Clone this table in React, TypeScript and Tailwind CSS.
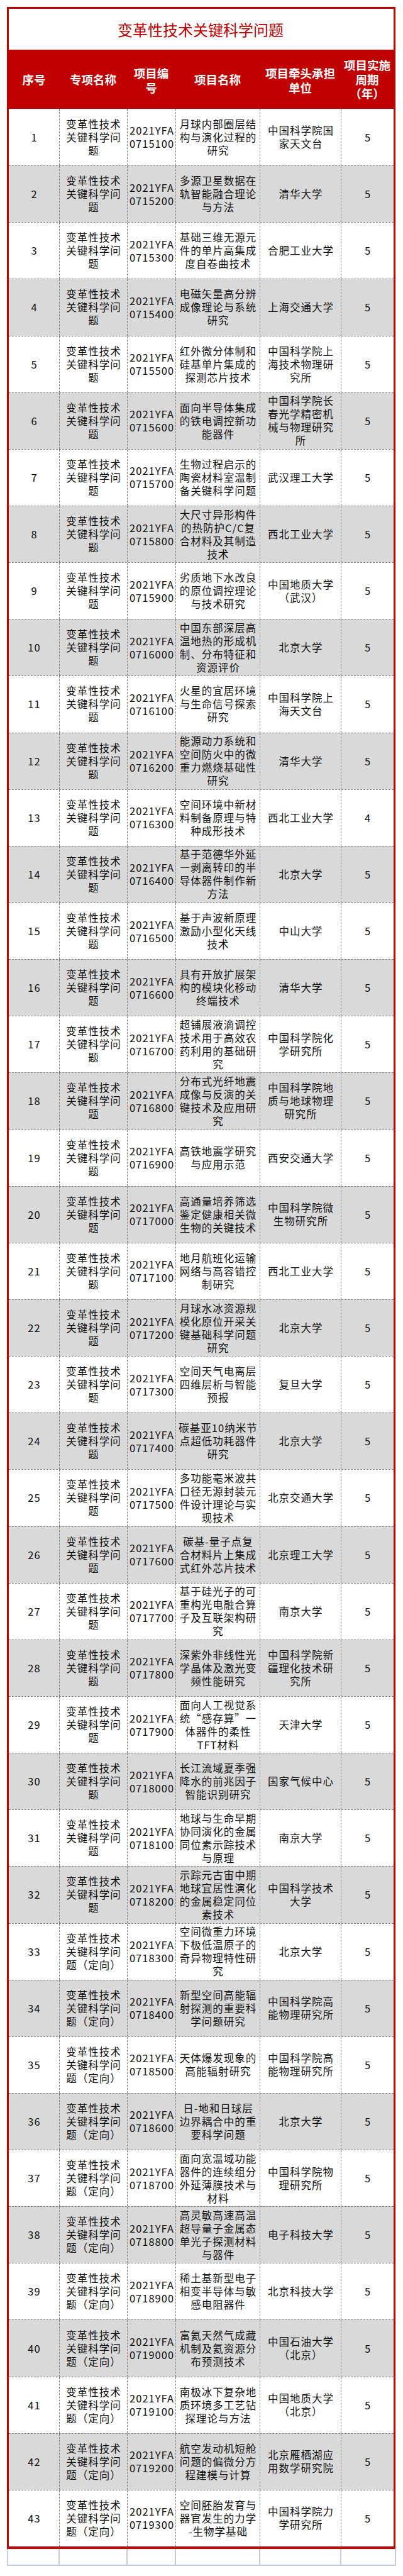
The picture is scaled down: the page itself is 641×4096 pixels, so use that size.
import React from 'react';

type Project = {
  code: string;
  name: string;
  unit: string;
  years?: number;
  directed?: boolean;
};

// lines inside a cell are separated by "|"
const projects: Project[] = [
  { code: '0715100', name: '月球内部圈层结|构与演化过程的|研究', unit: '中国科学院国|家天文台' },
  { code: '0715200', name: '多源卫星数据在|轨智能融合理论|与方法', unit: '清华大学' },
  { code: '0715300', name: '基础三维无源元|件的单片高集成|度自卷曲技术', unit: '合肥工业大学' },
  { code: '0715400', name: '电磁矢量高分辨|成像理论与系统|研究', unit: '上海交通大学' },
  { code: '0715500', name: '红外微分体制和|硅基单片集成的|探测芯片技术', unit: '中国科学院上|海技术物理研|究所' },
  { code: '0715600', name: '面向半导体集成|的铁电调控新功|能器件', unit: '中国科学院长|春光学精密机|械与物理研究|所' },
  { code: '0715700', name: '生物过程启示的|陶瓷材料室温制|备关键科学问题', unit: '武汉理工大学' },
  { code: '0715800', name: '大尺寸异形构件|的热防护C/C复|合材料及其制造|技术', unit: '西北工业大学' },
  { code: '0715900', name: '劣质地下水改良|的原位调控理论|与技术研究', unit: '中国地质大学|（武汉）' },
  { code: '0716000', name: '中国东部深层高|温地热的形成机|制、分布特征和|资源评价', unit: '北京大学' },
  { code: '0716100', name: '火星的宜居环境|与生命信号探索|研究', unit: '中国科学院上|海天文台' },
  { code: '0716200', name: '能源动力系统和|空间防火中的微|重力燃烧基础性|研究', unit: '清华大学' },
  { code: '0716300', name: '空间环境中新材|料制备原理与特|种成形技术', unit: '西北工业大学', years: 4 },
  { code: '0716400', name: '基于范德华外延|—剥离转印的半|导体器件制作新|方法', unit: '北京大学' },
  { code: '0716500', name: '基于声波新原理|激励小型化天线|技术', unit: '中山大学' },
  { code: '0716600', name: '具有开放扩展架|构的模块化移动|终端技术', unit: '清华大学' },
  { code: '0716700', name: '超铺展液滴调控|技术用于高效农|药利用的基础研|究', unit: '中国科学院化|学研究所' },
  { code: '0716800', name: '分布式光纤地震|成像与反演的关|键技术及应用研|究', unit: '中国科学院地|质与地球物理|研究所' },
  { code: '0716900', name: '高铁地震学研究|与应用示范', unit: '西安交通大学' },
  { code: '0717000', name: '高通量培养筛选|鉴定健康相关微|生物的关键技术', unit: '中国科学院微|生物研究所' },
  { code: '0717100', name: '地月航班化运输|网络与高容错控|制研究', unit: '西北工业大学' },
  { code: '0717200', name: '月球水冰资源规|模化原位开采关|键基础科学问题|研究', unit: '北京大学' },
  { code: '0717300', name: '空间天气电离层|四维层析与智能|预报', unit: '复旦大学' },
  { code: '0717400', name: '碳基亚10纳米节|点超低功耗器件|研究', unit: '北京大学' },
  { code: '0717500', name: '多功能毫米波共|口径无源封装元|件设计理论与实|现技术', unit: '北京交通大学' },
  { code: '0717600', name: '碳基-量子点复|合材料片上集成|式红外芯片技术', unit: '北京理工大学' },
  { code: '0717700', name: '基于硅光子的可|重构光电融合算|子及互联架构研|究', unit: '南京大学' },
  { code: '0717800', name: '深紫外非线性光|学晶体及激光变|频性能研究', unit: '中国科学院新|疆理化技术研|究所' },
  { code: '0717900', name: '面向人工视觉系|统“感存算”一|体器件的柔性|TFT材料', unit: '天津大学' },
  { code: '0718000', name: '长江流域夏季强|降水的前兆因子|智能识别研究', unit: '国家气候中心' },
  { code: '0718100', name: '地球与生命早期|协同演化的金属|同位素示踪技术|与原理', unit: '南京大学' },
  { code: '0718200', name: '示踪元古宙中期|地球宜居性演化|的金属稳定同位|素技术', unit: '中国科学技术|大学' },
  { code: '0718300', name: '空间微重力环境|下极低温原子的|奇异物理特性研|究', unit: '北京大学', directed: true },
  { code: '0718400', name: '新型空间高能辐|射探测的重要科|学问题研究', unit: '中国科学院高|能物理研究所', directed: true },
  { code: '0718500', name: '天体爆发现象的|高能辐射研究', unit: '中国科学院高|能物理研究所', directed: true },
  { code: '0718600', name: '日-地和日球层|边界耦合中的重|要科学问题', unit: '北京大学', directed: true },
  { code: '0718700', name: '面向宽温域功能|器件的连续组分|外延薄膜技术与|材料', unit: '中国科学院物|理研究所', directed: true },
  { code: '0718800', name: '高灵敏高速高温|超导量子金属态|单光子探测材料|与器件', unit: '电子科技大学', directed: true },
  { code: '0718900', name: '稀土基新型电子|相变半导体与敏|感电阻器件', unit: '北京科技大学', directed: true },
  { code: '0719000', name: '富氦天然气成藏|机制及氦资源分|布预测技术', unit: '中国石油大学|（北京）', directed: true },
  { code: '0719100', name: '南极冰下复杂地|质环境多工艺钻|探理论与方法', unit: '中国地质大学|（北京）', directed: true },
  { code: '0719200', name: '航空发动机短舱|问题的偏微分方|程建模与计算', unit: '北京雁栖湖应|用数学研究院', directed: true },
  { code: '0719300', name: '空间胚胎发育与|器官发生的力学|-生物学基础', unit: '中国科学院力|学研究所', directed: true },
];

const Lines: React.FC<{ text: string }> = ({ text }) => (
  <>
    {text.split('|').map((line, i) => (
      <span key={i} className="block">
        {line}
      </span>
    ))}
  </>
);

const Cell: React.FC<{ text: string; first?: boolean }> = ({ text, first }) => (
  <div
    className={`flex flex-col items-center justify-center text-center pl-px ${
      first ? '' : 'border-l border-dashed border-[#7f7f7f]'
    }`}
  >
    <Lines text={text} />
  </div>
);

const App: React.FC = () => {
  return (
    <div
      lang="zh-CN"
      className="w-[641px] min-h-[4096px] bg-white pt-[11px] font-['Noto_Sans_CJK_SC','Noto_Sans',sans-serif] text-[#111]"
    >
      <div className="ml-[11px] w-[618px] border-x-[3px] border-t-[3px] border-b-4 border-[#c00000]">
        {/* Title */}
        <div className="h-[65px] flex items-center justify-center">
          <h1 className="text-[24px] leading-none text-[#c00000] pr-[2px]">变革性技术关键科学问题</h1>
        </div>

        {/* Header */}
        <div className="grid grid-cols-[80px_108px_77px_134px_129px_84px] h-[94px] bg-[#c00000] text-white font-bold text-[18.5px] leading-[22.5px]">
          <div className="flex items-center justify-center">序号</div>
          <div className="flex items-center justify-center">专项名称</div>
          <div className="flex flex-col items-center justify-center pt-[3px]">
            <span>项目编</span>
            <span>号</span>
          </div>
          <div className="flex items-center justify-center">项目名称</div>
          <div className="flex flex-col items-center justify-center pt-[3px]">
            <span>项目牵头承担</span>
            <span>单位</span>
          </div>
          <div className="flex flex-col items-center justify-center">
            <span>项目实施</span>
            <span>周期</span>
            <span>（年）</span>
          </div>
        </div>

        {/* Rows */}
        {projects.map((p, i) => (
          <div
            key={p.code}
            className={`grid grid-cols-[80px_108px_77px_134px_129px_84px] h-[90.15px] text-[16.5px] leading-[21px] tracking-[1px] ${
              i % 2 === 1 ? 'bg-[#d9d9d9]' : 'bg-white'
            } ${i === 0 ? '' : 'border-t border-dashed border-[#7f7f7f]'}`}
          >
            <Cell first text={String(i + 1)} />
            <Cell text={p.directed ? '变革性技术|关键科学问|题（定向）' : '变革性技术|关键科学问|题'} />
            <Cell text={`2021YFA|${p.code}`} />
            <Cell text={p.name} />
            <Cell text={p.unit} />
            <Cell text={String(p.years ?? 5)} />
          </div>
        ))}
      </div>

      {/* empty spreadsheet row under the table */}
      <div className="ml-[11px] w-[619px] h-[27px] grid grid-cols-[82px_108px_77px_134px_129px_89px] border-b-2 border-[#c5cad8]">
        <div className="border-l-2 border-[#c5cad8]" />
        <div className="border-l-2 border-[#c5cad8]" />
        <div className="border-l-2 border-[#c5cad8]" />
        <div className="border-l-2 border-[#c5cad8]" />
        <div className="border-l-2 border-[#c5cad8]" />
        <div className="border-x-2 border-[#c5cad8]" />
      </div>
    </div>
  );
};

export default App;
